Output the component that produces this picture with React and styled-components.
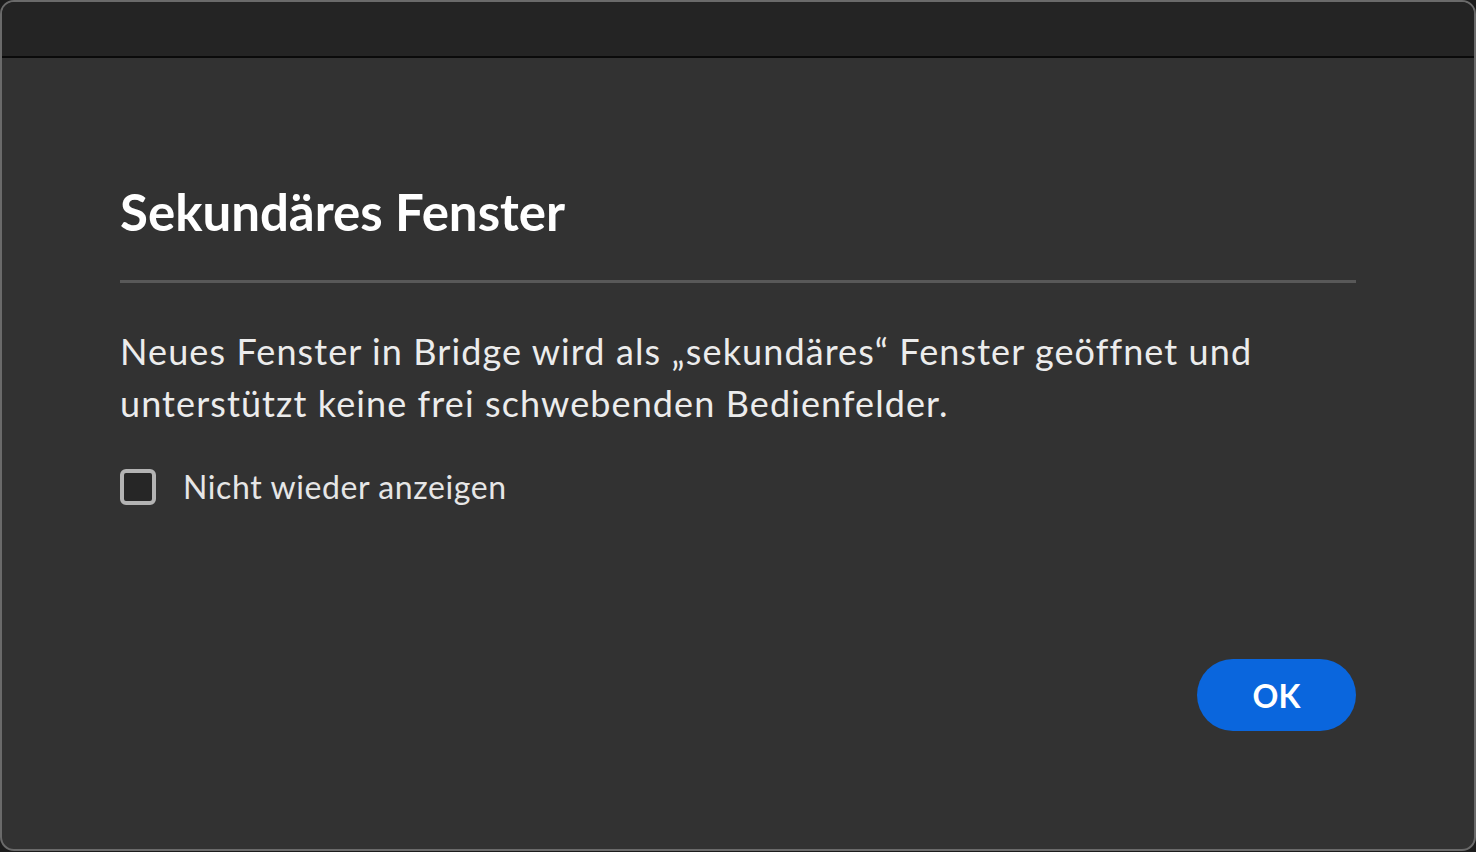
import React from "react";
import styled, { createGlobalStyle } from "styled-components";

const Global = createGlobalStyle`
  html, body { margin: 0; padding: 0; background: #1c1c1c; }
  body { font-family: Lato, "Open Sans", sans-serif; }
  * { box-sizing: border-box; }
`;

const Window = styled.div`
  width: 1476px;
  height: 851px;
  background: #323232;
  border: 2px solid #6a6a6a;
  border-radius: 14px;
  overflow: hidden;
  display: flex;
  flex-direction: column;
`;

const TitleBar = styled.div`
  height: 56px;
  flex: none;
  background: #242424;
  border-bottom: 2px solid #0a0a0a;
`;

const Body = styled.div`
  flex: 1;
  display: flex;
  flex-direction: column;
  padding: 0 118px 0 118px;
`;

const Title = styled.h1`
  margin: 122px 0 0 0;
  font-family: Lato, sans-serif;
  font-weight: 700;
  font-size: 51px;
  line-height: 64px;
  color: #ffffff;
`;

const Divider = styled.hr`
  margin: 36px 0 0 0;
  border: none;
  height: 3px;
  background: #585858;
`;

const Message = styled.p`
  margin: 42px 0 0 0;
  font-size: 36px;
  line-height: 52px;
  letter-spacing: 1.1px;
  color: #ececec;
`;

const CheckRow = styled.label`
  margin-top: 38px;
  display: flex;
  align-items: center;
  gap: 27px;
  font-size: 32px;
  letter-spacing: 0.6px;
  color: #e6e6e6;
`;

const Box = styled.span`
  width: 36px;
  height: 36px;
  border: 4px solid #b3b3b3;
  border-radius: 6px;
  background: #262626;
  flex: none;
`;

const Footer = styled.div`
  margin-top: auto;
  margin-bottom: 118px;
  display: flex;
  justify-content: flex-end;
`;

const OkButton = styled.button`
  width: 159px;
  height: 72px;
  border: none;
  border-radius: 36px;
  background: #0a66dd;
  color: #fff;
  font-family: Lato, sans-serif;
  font-weight: 700;
  font-size: 32px;
`;

export default function App() {
  return (
    <>
      <Global />
      <Window>
        <TitleBar />
        <Body>
          <Title>Sekundäres Fenster</Title>
          <Divider />
          <Message>
            Neues Fenster in Bridge wird als „sekundäres“ Fenster geöffnet und
            <br />
            unterstützt keine frei schwebenden Bedienfelder.
          </Message>
          <CheckRow>
            <Box />
            Nicht wieder anzeigen
          </CheckRow>
          <Footer>
            <OkButton>OK</OkButton>
          </Footer>
        </Body>
      </Window>
    </>
  );
}
